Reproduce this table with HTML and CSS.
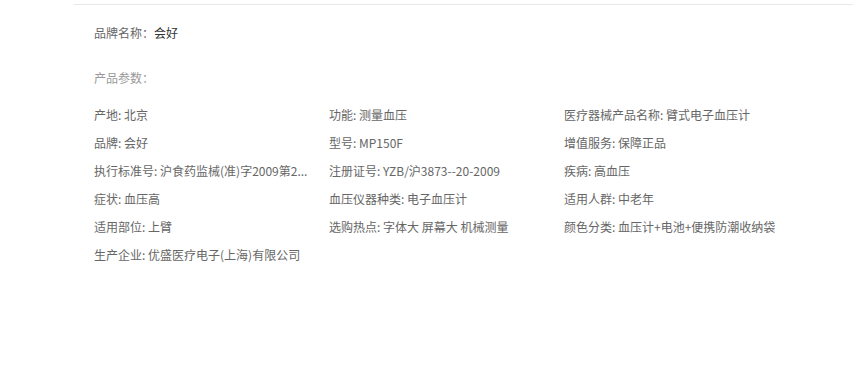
FILE: index.html
```html
<!DOCTYPE html>
<html lang="zh-CN">
<head>
<meta charset="utf-8">
<title>产品参数</title>
<link rel="stylesheet" href="styles.css">
</head>
<body>
<div class="panel">
  <div class="brand">品牌名称：<span class="brand-name">会好</span></div>
  <div class="params-title">产品参数：</div>
  <ul class="params">
    <li>产地: 北京</li>
    <li>功能: 测量血压</li>
    <li>医疗器械产品名称: 臂式电子血压计</li>
    <li>品牌: 会好</li>
    <li>型号: MP150F</li>
    <li>增值服务: 保障正品</li>
    <li>执行标准号: 沪食药监械(准)字2009第2...</li>
    <li>注册证号: YZB/沪3873--20-2009</li>
    <li>疾病: 高血压</li>
    <li>症状: 血压高</li>
    <li>血压仪器种类: 电子血压计</li>
    <li>适用人群: 中老年</li>
    <li>适用部位: 上臂</li>
    <li>选购热点: 字体大 屏幕大 机械测量</li>
    <li>颜色分类: 血压计+电池+便携防潮收纳袋</li>
    <li>生产企业: 优盛医疗电子(上海)有限公司</li>
  </ul>
</div>
</body>
</html>
```
FILE: styles.css
```css
html, body {
  margin: 0;
  padding: 0;
  background: #fff;
}
body {
  font-family: "Microsoft YaHei", "Noto Sans CJK SC", "Noto Sans", sans-serif;
  font-size: 12px;
}
.panel {
  margin: 4px 0 0 74px;
  border-top: 1px solid #e8e8e8;
  padding: 18px 0 0 20px;
}
.brand {
  line-height: 20px;
  color: #666;
}
.brand-name {
  color: #333;
}
.params-title {
  margin-top: 25px;
  line-height: 20px;
  color: #999;
}
.params {
  list-style: none;
  margin: 13px 0 0 0;
  padding: 0;
  display: grid;
  grid-template-columns: repeat(3, 235px);
}
.params li {
  line-height: 28px;
  color: #666;
  padding-right: 8px;
  white-space: nowrap;
}
```
